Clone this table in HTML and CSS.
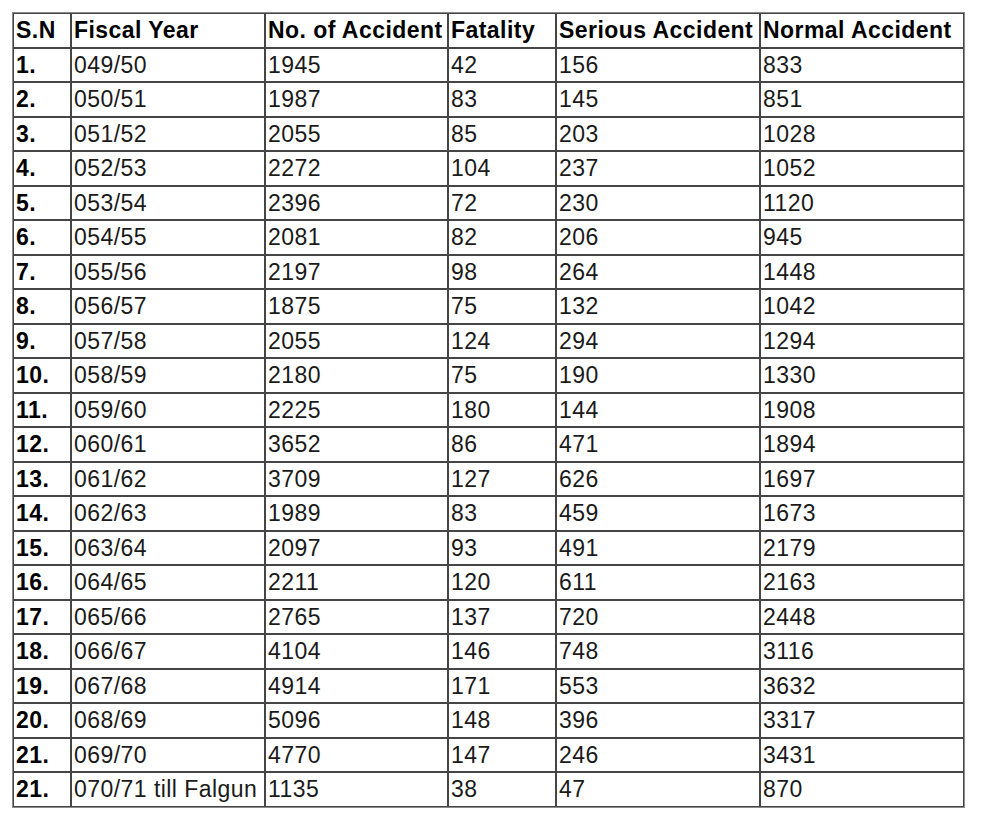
FILE: index.html
```html
<!DOCTYPE html>
<html>
<head>
<meta charset="utf-8">
<link rel="stylesheet" href="styles.css">
</head>
<body>
<table class="stats">
<colgroup>
<col class="c-sn"><col class="c-fy"><col class="c-no"><col class="c-fat"><col class="c-ser"><col class="c-nor">
</colgroup>
<thead>
<tr><th>S.N</th><th>Fiscal Year</th><th>No. of Accident</th><th>Fatality</th><th>Serious Accident</th><th>Normal Accident</th></tr>
</thead>
<tbody>
<tr><th>1.</th><td>049/50</td><td>1945</td><td>42</td><td>156</td><td>833</td></tr>
<tr><th>2.</th><td>050/51</td><td>1987</td><td>83</td><td>145</td><td>851</td></tr>
<tr><th>3.</th><td>051/52</td><td>2055</td><td>85</td><td>203</td><td>1028</td></tr>
<tr><th>4.</th><td>052/53</td><td>2272</td><td>104</td><td>237</td><td>1052</td></tr>
<tr><th>5.</th><td>053/54</td><td>2396</td><td>72</td><td>230</td><td>1120</td></tr>
<tr><th>6.</th><td>054/55</td><td>2081</td><td>82</td><td>206</td><td>945</td></tr>
<tr><th>7.</th><td>055/56</td><td>2197</td><td>98</td><td>264</td><td>1448</td></tr>
<tr><th>8.</th><td>056/57</td><td>1875</td><td>75</td><td>132</td><td>1042</td></tr>
<tr><th>9.</th><td>057/58</td><td>2055</td><td>124</td><td>294</td><td>1294</td></tr>
<tr><th>10.</th><td>058/59</td><td>2180</td><td>75</td><td>190</td><td>1330</td></tr>
<tr><th>11.</th><td>059/60</td><td>2225</td><td>180</td><td>144</td><td>1908</td></tr>
<tr><th>12.</th><td>060/61</td><td>3652</td><td>86</td><td>471</td><td>1894</td></tr>
<tr><th>13.</th><td>061/62</td><td>3709</td><td>127</td><td>626</td><td>1697</td></tr>
<tr><th>14.</th><td>062/63</td><td>1989</td><td>83</td><td>459</td><td>1673</td></tr>
<tr><th>15.</th><td>063/64</td><td>2097</td><td>93</td><td>491</td><td>2179</td></tr>
<tr><th>16.</th><td>064/65</td><td>2211</td><td>120</td><td>611</td><td>2163</td></tr>
<tr><th>17.</th><td>065/66</td><td>2765</td><td>137</td><td>720</td><td>2448</td></tr>
<tr><th>18.</th><td>066/67</td><td>4104</td><td>146</td><td>748</td><td>3116</td></tr>
<tr><th>19.</th><td>067/68</td><td>4914</td><td>171</td><td>553</td><td>3632</td></tr>
<tr><th>20.</th><td>068/69</td><td>5096</td><td>148</td><td>396</td><td>3317</td></tr>
<tr><th>21.</th><td>069/70</td><td>4770</td><td>147</td><td>246</td><td>3431</td></tr>
<tr><th>21.</th><td>070/71 till Falgun</td><td>1135</td><td>38</td><td>47</td><td>870</td></tr>
</tbody>
</table>
</body>
</html>
```
FILE: styles.css
```css
html, body {
  margin: 0;
  background: #ffffff;
}
body {
  padding: 12px;
  font-family: "Liberation Sans", Arial, Helvetica, sans-serif;
}
.stats {
  border-collapse: separate;
  border-spacing: 0;
  table-layout: fixed;
  width: 953px;
  border: 1px solid #8a8a8a;
}
.c-sn { width: 58px; }
.c-fy { width: 194px; }
.c-no { width: 183px; }
.c-fat { width: 108px; }
.c-ser { width: 204px; }
.c-nor { width: 204px; }
.stats th,
.stats td {
  border: 1px solid #454545;
  padding: 3px 1px 3px 2px;
  font-size: 23px;
  line-height: 26.5px;
  letter-spacing: 0.45px;
  text-align: left;
  white-space: nowrap;
  overflow: hidden;
}
.stats th {
  font-weight: bold;
  color: #000;
}
.stats td {
  font-weight: normal;
  color: #1a1a1a;
}
```
